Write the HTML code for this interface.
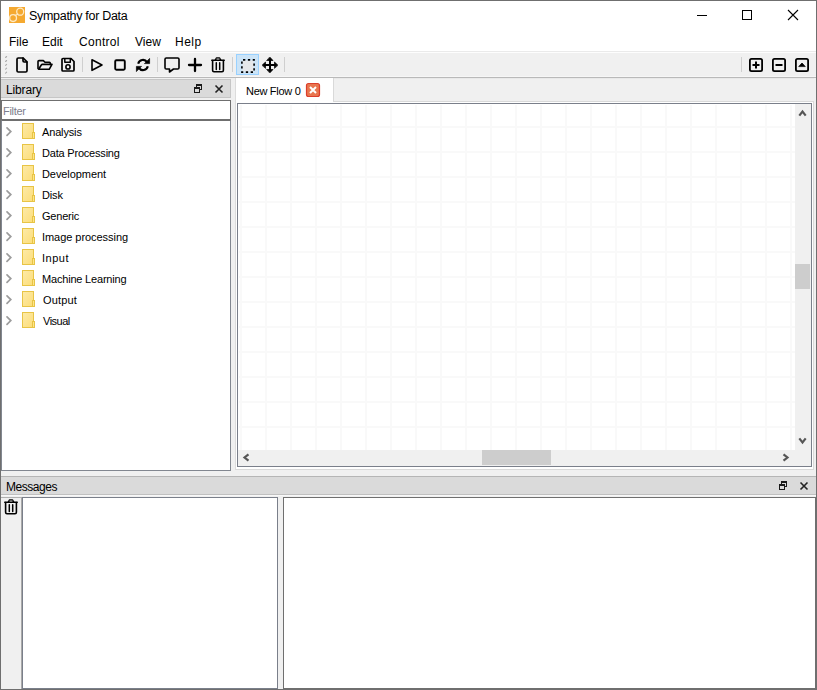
<!DOCTYPE html>
<html><head><meta charset="utf-8">
<style>
*{margin:0;padding:0;box-sizing:border-box}
html,body{width:817px;height:690px;overflow:hidden;background:#f0f0f0}
body{position:relative;font-family:"Liberation Sans",sans-serif;color:#000}
.a{position:absolute}
.t{position:absolute;white-space:nowrap;line-height:1}
</style></head><body>
<!-- window border -->
<div class="a" style="left:0;top:0;width:817px;height:690px;border:1px solid #6f6f6f"></div>
<!-- title bar + menu -->
<div class="a" style="left:1px;top:1px;width:815px;height:50px;background:#fff"></div>
<div class="a" style="left:1px;top:51px;width:815px;height:1px;background:#eaeaea"></div>
<div class="a" style="left:1px;top:52px;width:815px;height:1px;background:#fdfdfd"></div>
<div class="t" style="left:29px;top:10px;font-size:12.5px;letter-spacing:-0.3px">Sympathy for Data</div>
<div class="t" style="left:9px;top:36px;font-size:12px">File</div>
<div class="t" style="left:42px;top:36px;font-size:12px">Edit</div>
<div class="t" style="left:79px;top:36px;font-size:12px;letter-spacing:0.3px">Control</div>
<div class="t" style="left:135px;top:36px;font-size:12px">View</div>
<div class="t" style="left:175px;top:36px;font-size:12px;letter-spacing:0.5px">Help</div>
<!-- toolbar bottom line -->
<div class="a" style="left:1px;top:76px;width:815px;height:1px;background:#f6f6f6"></div><div class="a" style="left:1px;top:77px;width:815px;height:1px;background:#b9b9b9"></div>
<!-- selected tool button -->
<div class="a" style="left:236px;top:54px;width:23px;height:21px;background:#cce4f7;border:1px solid #99d1ff"></div>

<!-- Library dock -->
<div class="a" style="left:1px;top:79px;width:230px;height:19px;background:#dadada;border:1px solid #c6c6c6;border-left:none"></div>
<div class="t" style="left:6px;top:84px;font-size:12px;letter-spacing:-0.15px">Library</div>
<div class="a" style="left:1px;top:100px;width:230px;height:20px;background:#fff;border:1px solid #6f6f6f"></div>
<div class="t" style="left:3px;top:106px;font-size:11px;letter-spacing:-0.3px;color:#7d7d8c">Filter</div>
<div class="a" style="left:1px;top:120px;width:230px;height:351px;background:#fff;border:1px solid #828790;border-top-color:#6f6f6f"></div>
<div class="t" style="left:42px;top:127px;font-size:11px;letter-spacing:-0.15px">Analysis</div>
<div class="t" style="left:42px;top:148px;font-size:11px;letter-spacing:-0.2px">Data Processing</div>
<div class="t" style="left:42px;top:169px;font-size:11px;letter-spacing:-0.08px">Development</div>
<div class="t" style="left:42px;top:190px;font-size:11px;letter-spacing:-0.15px">Disk</div>
<div class="t" style="left:42px;top:211px;font-size:11px;letter-spacing:-0.22px">Generic</div>
<div class="t" style="left:42px;top:232px;font-size:11px;letter-spacing:-0.05px">Image processing</div>
<div class="t" style="left:42px;top:253px;font-size:11px;letter-spacing:0.5px">Input</div>
<div class="t" style="left:42px;top:274px;font-size:11px;letter-spacing:-0.19px">Machine Learning</div>
<div class="t" style="left:43px;top:295px;font-size:11px;letter-spacing:0.15px">Output</div>
<div class="t" style="left:43px;top:316px;font-size:11px;letter-spacing:-0.5px">Visual</div>

<!-- Tab widget -->
<div class="a" style="left:235px;top:101px;width:579px;height:369px;background:#fff;border:1px solid #d9d9d9;border-left-color:#dcdcdc"></div>
<div class="a" style="left:333px;top:78px;width:481px;height:1px;background:#e9e9e9"></div>
<div class="a" style="left:235px;top:78px;width:99px;height:24px;background:#fff;border-left:1px solid #dcdcdc;border-right:1px solid #d9d9d9"></div>
<div class="t" style="left:246px;top:86px;font-size:11px;letter-spacing:-0.3px">New Flow 0</div>
<!-- canvas pane -->
<div class="a" style="left:237px;top:103px;width:575px;height:364px;border:1px solid #7a7f8a;background:#fff"></div>
<svg class="a" style="left:0;top:0" width="817" height="690"><path d="M241,105 V450 M266,105 V450 M291,105 V450 M316,105 V450 M341,105 V450 M366,105 V450 M391,105 V450 M416,105 V450 M441,105 V450 M466,105 V450 M491,105 V450 M516,105 V450 M541,105 V450 M566,105 V450 M591,105 V450 M616,105 V450 M641,105 V450 M666,105 V450 M691,105 V450 M716,105 V450 M741,105 V450 M766,105 V450 M791,105 V450 M239,127 H795 M239,152 H795 M239,177 H795 M239,202 H795 M239,227 H795 M239,252 H795 M239,277 H795 M239,302 H795 M239,327 H795 M239,352 H795 M239,377 H795 M239,402 H795 M239,427 H795" stroke="#f9f9f9" stroke-width="2" fill="none"/></svg>
<!-- v scrollbar -->
<div class="a" style="left:795px;top:104px;width:16px;height:346px;background:#f0f0f0"></div>
<div class="a" style="left:795px;top:264px;width:15px;height:25px;background:#cdcdcd"></div>
<!-- h scrollbar -->
<div class="a" style="left:238px;top:450px;width:573px;height:16px;background:#f0f0f0"></div>
<div class="a" style="left:482px;top:450px;width:69px;height:15px;background:#cdcdcd"></div>

<!-- splitter line -->
<div class="a" style="left:1px;top:476px;width:815px;height:1px;background:#b5b5b5"></div>
<!-- Messages dock -->
<div class="a" style="left:1px;top:477px;width:815px;height:18px;background:#dadada;border-bottom:1px solid #c0c0c0"></div>
<div class="t" style="left:6px;top:481px;font-size:12px;letter-spacing:-0.45px">Messages</div>
<div class="a" style="left:1px;top:495px;width:815px;height:1px;background:#f8f8f8"></div>
<div class="a" style="left:1px;top:497px;width:21px;height:1px;background:#b0b0b0"></div><div class="a" style="left:21px;top:497px;width:1px;height:192px;background:#a9a9a9"></div><div class="a" style="left:22px;top:497px;width:256px;height:192px;background:#fff;border:1px solid #7a7f8a"></div>
<div class="a" style="left:283px;top:497px;width:533px;height:192px;background:#fff;border:1px solid #6f6f6f"></div>
<div class="a" style="left:0;top:689px;width:817px;height:1px;background:#6f6f6f"></div>
<div class="a" style="left:816px;top:0;width:1px;height:690px;background:#6f6f6f"></div>

<!-- icon overlay -->
<svg class="a" style="left:0;top:0" width="817" height="690" fill="none" stroke="#000" stroke-linecap="round" stroke-linejoin="round">
<!-- app icon -->
<rect x="9" y="7" width="16" height="16" fill="#f5a930" stroke="none"/>
<circle cx="13.1" cy="18.1" r="3.4" stroke="#fde9c4" stroke-width="1.3"/>
<circle cx="20.2" cy="11.7" r="3.5" stroke="#fde9c4" stroke-width="1.3"/>
<path d="M15.3,15.6 L17.9,14" stroke="#fde9c4" stroke-width="1.2"/>
<!-- window controls -->
<path d="M697,15.5 H707" stroke-width="1" stroke-linecap="butt"/>
<path d="M742.5,10.5 H751.5 V19.5 H742.5 Z" stroke-width="1" stroke-linejoin="miter" stroke-linecap="square" shape-rendering="crispEdges"/>
<path d="M788,10 L798,20 M798,10 L788,20" stroke-width="1.1" stroke-linecap="butt"/>
<!-- toolbar handle -->
<g stroke="#ababab" stroke-width="1.1">
<path d="M5.6,57.5 l1,-1 M5.6,61.5 l1,-1 M5.6,65.3 l1,-1 M5.6,69.2 l1,-1 M5.6,73.2 l1,-1"/>
</g>
<!-- separators -->
<g stroke="#cfcfcf" stroke-width="1" stroke-linecap="butt">
<path d="M82.5,57 V72 M157.5,57 V72 M232.5,57 V72 M284.5,57 V72 M741.5,57 V72"/>
</g>
<!-- new file -->
<path d="M17,59.3 Q17,58 18.3,58 H23.2 L27,61.8 V70.7 Q27,72 25.7,72 H18.3 Q17,72 17,70.7 Z" stroke-width="1.7"/>
<path d="M23,58.2 V60.8 Q23,62 24.2,62 H26.8" stroke-width="1.7"/>
<!-- open folder -->
<path d="M38,68.5 V61.5 Q38,60.6 39,60.6 H43.3 L45,62.3 H49.4 Q50.3,62.3 50.3,63.2 V64.4" stroke-width="1.6"/>
<path d="M38.6,69.3 L41.3,65 Q41.7,64.4 42.4,64.4 H52 L49.2,69.3 H38.6 Z" stroke-width="1.6"/>
<!-- save -->
<path d="M62,59.3 Q62,58.5 63,58.5 H71 L74,61.5 V70 Q74,71 73,71 H63 Q62,71 62,70 Z" stroke-width="1.7"/>
<path d="M64.8,58.7 V62.3 H70.3 V58.7" stroke-width="1.5"/>
<circle cx="68" cy="66.9" r="2.1" stroke-width="1.6"/>
<!-- play -->
<path d="M92,59.8 L102,65 L92,70.3 Z" stroke-width="1.6"/>
<!-- stop -->
<rect x="115.2" y="60.2" width="9.6" height="9.6" rx="1.2" stroke-width="1.9"/>
<!-- sync -->
<path d="M138.2,63.7 A4.9,4.9 0 0 1 147.1,62.1" stroke-width="2.1" stroke-linecap="butt"/>
<path d="M149.6,58.8 V63.6 H144.8 Z" fill="#000" stroke="#000" stroke-width="0.7"/>
<path d="M147.8,66.3 A4.9,4.9 0 0 1 138.9,67.9" stroke-width="2.1" stroke-linecap="butt"/>
<path d="M136.4,71.2 V66.4 H141.2 Z" fill="#000" stroke="#000" stroke-width="0.7"/>
<!-- comment -->
<path d="M166.3,58 H177.7 Q179,58 179,59.3 V67.7 Q179,69 177.7,69 H173.5 L169.5,72 V69 H166.3 Q165,69 165,67.7 V59.3 Q165,58 166.3,58 Z" stroke-width="1.6"/>
<!-- plus -->
<path d="M195,59 V71 M189,65 H201" stroke-width="2.3"/>
<!-- trash -->
<path d="M211.8,60.2 H224.2" stroke-width="1.6"/>
<path d="M215.4,60 L216.6,58 H219.4 L220.6,60" stroke-width="1.5"/>
<path d="M216.8,58.8 H219.2" stroke="#777" stroke-width="1"/>
<path d="M212.6,60.5 V70.3 Q212.6,71.8 214,71.8 H222 Q223.4,71.8 223.4,70.3 V60.5" stroke-width="1.6"/>
<path d="M216.3,62.8 V69.5 M219.7,62.8 V69.5" stroke-width="1.5"/>
<!-- select dashed -->
<rect x="242.5" y="60.5" width="11" height="11" fill="#e6e8ea" stroke="none"/>
<path stroke-width="1.6" stroke-linecap="butt" stroke-linejoin="miter" stroke-dasharray="2.3 2.58" d="M243,59.9 H254.1 V72.1 H241.9 V59.9 H243"/>
<!-- move -->
<g fill="#000" stroke="#000" stroke-width="0.7">
<path d="M270,57.3 L273,60.5 H267 Z"/>
<path d="M270,72.7 L273,69.5 H267 Z"/>
<path d="M262.3,65 L265.5,62 V68 Z"/>
<path d="M277.7,65 L274.5,62 V68 Z"/>
</g>
<path d="M270,60 V70 M265,65 H275" stroke-width="2" stroke-linecap="butt"/>
<!-- right boxes -->
<rect x="749.9" y="58.9" width="12.2" height="12.2" rx="1.6" stroke-width="1.8"/>
<path d="M752.5,65 H759.5 M756,61.5 V68.5" stroke-width="2" stroke-linecap="butt"/>
<rect x="772.9" y="58.9" width="12.2" height="12.2" rx="1.6" stroke-width="1.8"/>
<path d="M775.5,65 H782.5" stroke-width="2" stroke-linecap="butt"/>
<rect x="795.9" y="58.9" width="12.2" height="12.2" rx="1.6" stroke-width="1.8"/>
<path d="M799,66.3 L802,63 L805,66.3 Z" fill="#000" stroke-width="0.8"/>
<!-- library float/close -->
<g stroke="#1a1a1a" stroke-linecap="butt" shape-rendering="crispEdges">
<path d="M196.5,87 V84.5 H201.5 V89.5 H200" stroke-width="1"/>
<path d="M196,85 H202" stroke-width="2"/>
<rect x="194.5" y="87.5" width="5" height="5" stroke-width="1"/>
<path d="M194,88 H200" stroke-width="2"/>
</g>
<path d="M215.5,85.5 L222.5,92.5 M222.5,85.5 L215.5,92.5" stroke="#222" stroke-width="1.6" stroke-linecap="butt"/>
<!-- messages float/close -->
<g stroke="#1a1a1a" stroke-linecap="butt" shape-rendering="crispEdges">
<path d="M781.5,484 V481.5 H786.5 V486.5 H785" stroke-width="1"/>
<path d="M781,482 H787" stroke-width="2"/>
<rect x="779.5" y="484.5" width="5" height="5" stroke-width="1"/>
<path d="M779,485 H785" stroke-width="2"/>
</g>
<path d="M800.5,482.5 L807.5,489.5 M807.5,482.5 L800.5,489.5" stroke="#222" stroke-width="1.6" stroke-linecap="butt"/>
<!-- tab close -->
<rect x="306.5" y="83.5" width="13" height="13" rx="2" fill="#e8764f" stroke="#dc3f2c" stroke-width="1.2"/>
<path d="M310,87 L316,93 M316,87 L310,93" stroke="#fff" stroke-width="2" stroke-linecap="butt"/>
<!-- scroll arrows -->
<g stroke="#555" stroke-width="2.2" stroke-linecap="butt" stroke-linejoin="miter">
<path d="M799.3,115.6 L802.5,111.6 L805.7,115.6"/>
<path d="M799.3,438.4 L802.5,442.4 L805.7,438.4"/>
<path d="M248.5,454.3 L244.5,457.5 L248.5,460.7"/>
<path d="M783.5,454.3 L787.5,457.5 L783.5,460.7"/>
</g>
<!-- messages trash -->
<path d="M4.8,502.2 H17.2" stroke-width="1.6"/>
<path d="M8.4,502 L9.6,500 H12.4 L13.6,502" stroke-width="1.5"/>
<path d="M9.8,500.8 H12.2" stroke="#777" stroke-width="1"/>
<path d="M5.6,502.5 V512.3 Q5.6,513.8 7,513.8 H15 Q16.4,513.8 16.4,512.3 V502.5" stroke-width="1.6"/>
<path d="M9.3,504.8 V511.5 M12.7,504.8 V511.5" stroke-width="1.5"/>
<!-- tree chevrons and folders -->
<defs><linearGradient id="fg" x1="0" y1="0" x2="1" y2="1"><stop offset="0" stop-color="#fdeaa8"/><stop offset="1" stop-color="#fcdd78"/></linearGradient></defs><g id="rows"><path d="M7,127.8 L10.8,131.6 L7,135.4" stroke="#9c9c9c" stroke-width="1.7" stroke-linecap="round" stroke-linejoin="miter"/>
<rect x="22.5" y="123.5" width="11" height="15" fill="url(#fg)" stroke="#e8c445" stroke-width="1" shape-rendering="crispEdges"/>
<rect x="32.5" y="132.5" width="2" height="6" fill="#fde58a" stroke="#e8c445" stroke-width="1" shape-rendering="crispEdges"/>
<path d="M7,148.8 L10.8,152.6 L7,156.4" stroke="#9c9c9c" stroke-width="1.7" stroke-linecap="round" stroke-linejoin="miter"/>
<rect x="22.5" y="144.5" width="11" height="15" fill="url(#fg)" stroke="#e8c445" stroke-width="1" shape-rendering="crispEdges"/>
<rect x="32.5" y="153.5" width="2" height="6" fill="#fde58a" stroke="#e8c445" stroke-width="1" shape-rendering="crispEdges"/>
<path d="M7,169.8 L10.8,173.6 L7,177.4" stroke="#9c9c9c" stroke-width="1.7" stroke-linecap="round" stroke-linejoin="miter"/>
<rect x="22.5" y="165.5" width="11" height="15" fill="url(#fg)" stroke="#e8c445" stroke-width="1" shape-rendering="crispEdges"/>
<rect x="32.5" y="174.5" width="2" height="6" fill="#fde58a" stroke="#e8c445" stroke-width="1" shape-rendering="crispEdges"/>
<path d="M7,190.8 L10.8,194.6 L7,198.4" stroke="#9c9c9c" stroke-width="1.7" stroke-linecap="round" stroke-linejoin="miter"/>
<rect x="22.5" y="186.5" width="11" height="15" fill="url(#fg)" stroke="#e8c445" stroke-width="1" shape-rendering="crispEdges"/>
<rect x="32.5" y="195.5" width="2" height="6" fill="#fde58a" stroke="#e8c445" stroke-width="1" shape-rendering="crispEdges"/>
<path d="M7,211.8 L10.8,215.6 L7,219.4" stroke="#9c9c9c" stroke-width="1.7" stroke-linecap="round" stroke-linejoin="miter"/>
<rect x="22.5" y="207.5" width="11" height="15" fill="url(#fg)" stroke="#e8c445" stroke-width="1" shape-rendering="crispEdges"/>
<rect x="32.5" y="216.5" width="2" height="6" fill="#fde58a" stroke="#e8c445" stroke-width="1" shape-rendering="crispEdges"/>
<path d="M7,232.8 L10.8,236.6 L7,240.4" stroke="#9c9c9c" stroke-width="1.7" stroke-linecap="round" stroke-linejoin="miter"/>
<rect x="22.5" y="228.5" width="11" height="15" fill="url(#fg)" stroke="#e8c445" stroke-width="1" shape-rendering="crispEdges"/>
<rect x="32.5" y="237.5" width="2" height="6" fill="#fde58a" stroke="#e8c445" stroke-width="1" shape-rendering="crispEdges"/>
<path d="M7,253.8 L10.8,257.6 L7,261.4" stroke="#9c9c9c" stroke-width="1.7" stroke-linecap="round" stroke-linejoin="miter"/>
<rect x="22.5" y="249.5" width="11" height="15" fill="url(#fg)" stroke="#e8c445" stroke-width="1" shape-rendering="crispEdges"/>
<rect x="32.5" y="258.5" width="2" height="6" fill="#fde58a" stroke="#e8c445" stroke-width="1" shape-rendering="crispEdges"/>
<path d="M7,274.8 L10.8,278.6 L7,282.4" stroke="#9c9c9c" stroke-width="1.7" stroke-linecap="round" stroke-linejoin="miter"/>
<rect x="22.5" y="270.5" width="11" height="15" fill="url(#fg)" stroke="#e8c445" stroke-width="1" shape-rendering="crispEdges"/>
<rect x="32.5" y="279.5" width="2" height="6" fill="#fde58a" stroke="#e8c445" stroke-width="1" shape-rendering="crispEdges"/>
<path d="M7,295.8 L10.8,299.6 L7,303.4" stroke="#9c9c9c" stroke-width="1.7" stroke-linecap="round" stroke-linejoin="miter"/>
<rect x="22.5" y="291.5" width="11" height="15" fill="url(#fg)" stroke="#e8c445" stroke-width="1" shape-rendering="crispEdges"/>
<rect x="32.5" y="300.5" width="2" height="6" fill="#fde58a" stroke="#e8c445" stroke-width="1" shape-rendering="crispEdges"/>
<path d="M7,316.8 L10.8,320.6 L7,324.4" stroke="#9c9c9c" stroke-width="1.7" stroke-linecap="round" stroke-linejoin="miter"/>
<rect x="22.5" y="312.5" width="11" height="15" fill="url(#fg)" stroke="#e8c445" stroke-width="1" shape-rendering="crispEdges"/>
<rect x="32.5" y="321.5" width="2" height="6" fill="#fde58a" stroke="#e8c445" stroke-width="1" shape-rendering="crispEdges"/></g>
</svg>
</body></html>
